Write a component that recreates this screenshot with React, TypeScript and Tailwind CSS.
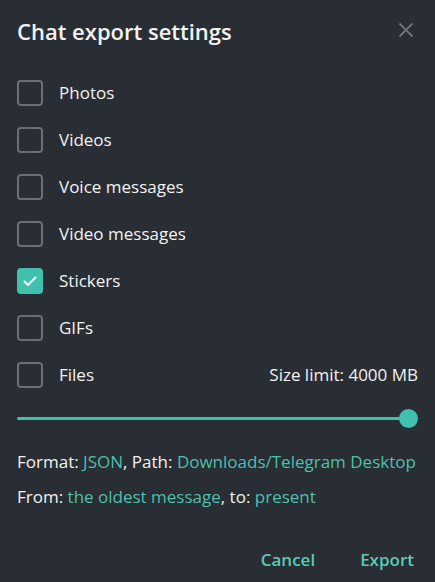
const items = [
  { label: "Photos", checked: false },
  { label: "Videos", checked: false },
  { label: "Voice messages", checked: false },
  { label: "Video messages", checked: false },
  { label: "Stickers", checked: true },
  { label: "GIFs", checked: false },
  { label: "Files", checked: false },
];

function Box({ checked }: { checked: boolean }) {
  if (checked) {
    return (
      <div className="w-[26px] h-[26px] rounded-[4px] bg-[#40c1ae] flex items-center justify-center">
        <svg width="14" height="11" viewBox="0 0 14 11" fill="none">
          <path d="M1.5 5.5 L5 9 L12.5 1.5" stroke="#ffffff" strokeWidth="2" strokeLinecap="round" strokeLinejoin="round" />
        </svg>
      </div>
    );
  }
  return <div className="w-[26px] h-[26px] rounded-[4px] border-2 border-[#6a6f73]" />;
}

export default function App() {
  return (
    <div
      className="w-[435px] h-[582px] bg-[#282e33] text-[#f2f2f2] flex flex-col"
      style={{ fontFamily: '"Open Sans", sans-serif' }}
    >
      <div className="flex items-center justify-between pl-[17px] pr-[21px] pt-[16px] h-[46px]">
        <h1 className="text-[22px] font-semibold leading-none">Chat export settings</h1>
        <svg width="16" height="16" viewBox="0 0 16 16" className="mt-[-2px]">
          <path d="M1.5 1.5 L14.5 14.5 M14.5 1.5 L1.5 14.5" stroke="#6e7478" strokeWidth="1.8" />
        </svg>
      </div>

      <div className="flex flex-col gap-[21px] pt-[34px] px-[17px]">
        {items.map((it, i) => (
          <div key={i} className="flex items-center h-[26px]">
            <Box checked={it.checked} />
            <span className="ml-[16px] text-[17px] leading-none mt-[-2px]">{it.label}</span>
            {it.label === "Files" && (
              <span className="ml-auto text-[17px] leading-none mt-[-2px]">Size limit: 4000 MB</span>
            )}
          </div>
        ))}
      </div>

      <div className="relative mx-[17px] mt-[20px] h-[20px] flex items-center">
        <div className="h-[3px] w-[calc(100%-9px)] bg-[#40c1ae] rounded-full" />
        <div className="absolute right-0 w-[19px] h-[19px] rounded-full bg-[#40c1ae]" />
      </div>

      <div className="px-[17px] mt-[25px] text-[17px] leading-none flex flex-col gap-[18px]">
        <p>
          Format: <span className="text-[#4fbfad]">JSON</span>, Path:{" "}
          <span className="text-[#4fbfad]">Downloads/Telegram Desktop</span>
        </p>
        <p>
          From: <span className="text-[#4fbfad]">the oldest message</span>, to:{" "}
          <span className="text-[#4fbfad]">present</span>
        </p>
      </div>

      <div className="flex justify-end gap-[45px] pr-[21px] mt-[46px] text-[17px] font-semibold text-[#5cc9b8] leading-none">
        <button>Cancel</button>
        <button>Export</button>
      </div>
    </div>
  );
}
